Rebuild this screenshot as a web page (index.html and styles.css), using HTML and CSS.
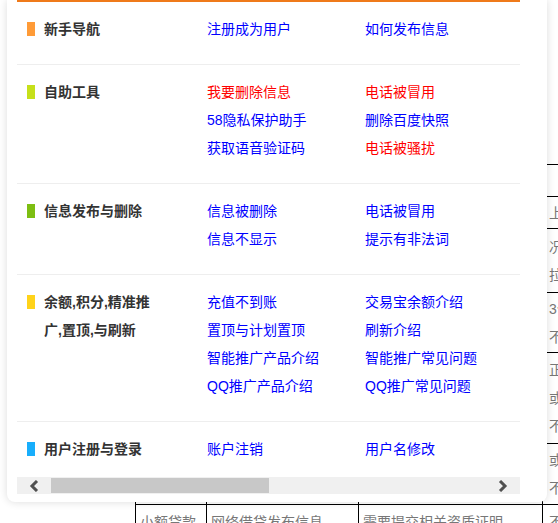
FILE: index.html
```html
<!DOCTYPE html>
<html lang="zh-CN">

<head>
    <meta charset="UTF-8">
    <meta name="viewport" content="width=device-width, initial-scale=1.0">
    <title>帮助中心</title>
    <link rel="stylesheet" href="styles.css">
</head>

<body>
    <!-- 底层页面表格 -->
    <div class="page">
        <table class="info-table">
            <tr>
                <td></td>
                <td></td>
                <td></td>
                <td></td>
            </tr>
            <tr>
                <td></td>
                <td></td>
                <td></td>
                <td>上门服务</td>
            </tr>
            <tr>
                <td></td>
                <td></td>
                <td></td>
                <td>况说明<br>拉黑处理</td>
            </tr>
            <tr>
                <td></td>
                <td></td>
                <td></td>
                <td>3个工作日<br>不予受理</td>
            </tr>
            <tr>
                <td></td>
                <td></td>
                <td></td>
                <td>正常处理<br>或人工审核<br>不予通过</td>
            </tr>
            <tr>
                <td></td>
                <td></td>
                <td></td>
                <td>或申请复核<br>不予退款</td>
            </tr>
            <tr>
                <td>小额贷款</td>
                <td>网络借贷发布信息</td>
                <td>需要提交相关资质证明</td>
                <td>不予通过</td>
            </tr>
        </table>
    </div>

    <!-- 帮助弹出层 -->
    <div class="help-pop">
        <div class="help-scroll">
            <div class="help-list">
                <div class="help-row">
                    <div class="help-cat"><i class="mark mark-orange"></i><span>新手导航</span></div>
                    <div class="help-links">
                        <a href="javascript:;">注册成为用户</a>
                        <a href="javascript:;">如何发布信息</a>
                    </div>
                </div>
                <div class="help-row">
                    <div class="help-cat"><i class="mark mark-lime"></i><span>自助工具</span></div>
                    <div class="help-links">
                        <a href="javascript:;" class="hot">我要删除信息</a>
                        <a href="javascript:;" class="hot">电话被冒用</a>
                        <a href="javascript:;">58隐私保护助手</a>
                        <a href="javascript:;">删除百度快照</a>
                        <a href="javascript:;">获取语音验证码</a>
                        <a href="javascript:;" class="hot">电话被骚扰</a>
                    </div>
                </div>
                <div class="help-row">
                    <div class="help-cat"><i class="mark mark-green"></i><span>信息发布与删除</span></div>
                    <div class="help-links">
                        <a href="javascript:;">信息被删除</a>
                        <a href="javascript:;">电话被冒用</a>
                        <a href="javascript:;">信息不显示</a>
                        <a href="javascript:;">提示有非法词</a>
                    </div>
                </div>
                <div class="help-row">
                    <div class="help-cat"><i class="mark mark-yellow"></i><span>余额,积分,精准推<br>广,置顶,与刷新</span></div>
                    <div class="help-links">
                        <a href="javascript:;">充值不到账</a>
                        <a href="javascript:;">交易宝余额介绍</a>
                        <a href="javascript:;">置顶与计划置顶</a>
                        <a href="javascript:;">刷新介绍</a>
                        <a href="javascript:;">智能推广产品介绍</a>
                        <a href="javascript:;">智能推广常见问题</a>
                        <a href="javascript:;">QQ推广产品介绍</a>
                        <a href="javascript:;">QQ推广常见问题</a>
                    </div>
                </div>
                <div class="help-row">
                    <div class="help-cat"><i class="mark mark-blue"></i><span>用户注册与登录</span></div>
                    <div class="help-links">
                        <a href="javascript:;">账户注销</a>
                        <a href="javascript:;">用户名修改</a>
                    </div>
                </div>
            </div>
            <!-- 横向滚动条 -->
            <div class="hbar">
                <span class="hbar-btn">
                    <svg width="10" height="12" viewBox="0 0 10 12"><polyline points="8,1 3,6 8,11" fill="none" stroke="#505050" stroke-width="3"/></svg>
                </span>
                <span class="hbar-thumb"></span>
                <span class="hbar-track"></span>
                <span class="hbar-btn">
                    <svg width="10" height="12" viewBox="0 0 10 12"><polyline points="2,1 7,6 2,11" fill="none" stroke="#505050" stroke-width="3"/></svg>
                </span>
            </div>
        </div>
    </div>
</body>

</html>
```

FILE: styles.css
```css
html,
body {
    margin: 0;
    padding: 0;
    overflow: hidden;
    background: #fff;
    font-family: "Liberation Sans", "Noto Sans CJK SC", sans-serif;
    font-size: 14px;
}

/* 底层页面 */
.page {
    padding: 164px 0 0 135px;
}

.info-table {
    table-layout: fixed;
    width: 607px;
    border-collapse: collapse;
    color: #777;
    line-height: 28px;
}

.info-table td {
    box-sizing: border-box;
    border: 1px solid #000;
    padding: 0 4px;
    vertical-align: middle;
    white-space: nowrap;
    overflow: hidden;
}

.info-table td:nth-child(1) {
    width: 71px;
}

.info-table td:nth-child(2) {
    width: 152px;
}

.info-table td:nth-child(3) {
    width: 184px;
}

.info-table td:nth-child(4) {
    width: 200px;
    padding-left: 6px;
}

.info-table tr:nth-child(1) td,
.info-table tr:nth-child(2) td {
    height: 32px;
}

.info-table tr:nth-child(3) td {
    height: 64px;
}

.info-table tr:nth-child(4) td {
    height: 60px;
}

.info-table tr:nth-child(5) td {
    height: 91px;
}

.info-table tr:nth-child(6) td {
    height: 61px;
}

.info-table tr:nth-child(7) td {
    vertical-align: top;
    padding-top: 3px;
}

/* 弹出层 */
.help-pop {
    position: absolute;
    left: 7px;
    top: 0;
    width: 540px;
    box-sizing: border-box;
    padding: 0 27px 8px 10px;
    background: #fff;
    border-radius: 0 0 8px 8px;
    box-shadow: 0 0 9px rgba(0, 0, 0, .14);
}

.help-scroll {
    overflow: hidden;
}

.help-list {
    border-top: 2px solid #ef7a1a;
}

.help-row {
    display: flex;
    padding: 13px 0 21px;
    border-bottom: 1px solid #eee;
    line-height: 28px;
    white-space: nowrap;
}

.help-row:last-child {
    border-bottom: 0;
    padding-bottom: 14px;
}

.help-cat {
    display: flex;
    align-items: flex-start;
    gap: 9px;
    width: 190px;
    flex-shrink: 0;
    box-sizing: border-box;
    padding-left: 10px;
    font-weight: bold;
    color: #333;
}

.mark {
    width: 8px;
    height: 14px;
    margin-top: 7px;
}

.mark-orange {
    background: #ff9b37;
}

.mark-lime {
    background: #c6e01a;
}

.mark-green {
    background: #7dbe12;
}

.mark-yellow {
    background: #ffd31a;
}

.mark-blue {
    background: #18aefc;
}

.help-links {
    display: grid;
    grid-template-columns: 158px 158px;
    grid-auto-rows: 28px;
}

.help-links a {
    color: #0000ff;
    text-decoration: none;
}

.help-links a.hot {
    color: #ff0000;
}

/* 滚动条 */
.hbar {
    display: flex;
    height: 17px;
    background: #f0f0f0;
}

.hbar-btn {
    width: 34px;
    display: flex;
    align-items: center;
    justify-content: center;
}

.hbar-thumb {
    width: 218px;
    height: 15px;
    margin-top: 1px;
    background: #c8c8c8;
}

.hbar-track {
    flex: 1;
}
```
